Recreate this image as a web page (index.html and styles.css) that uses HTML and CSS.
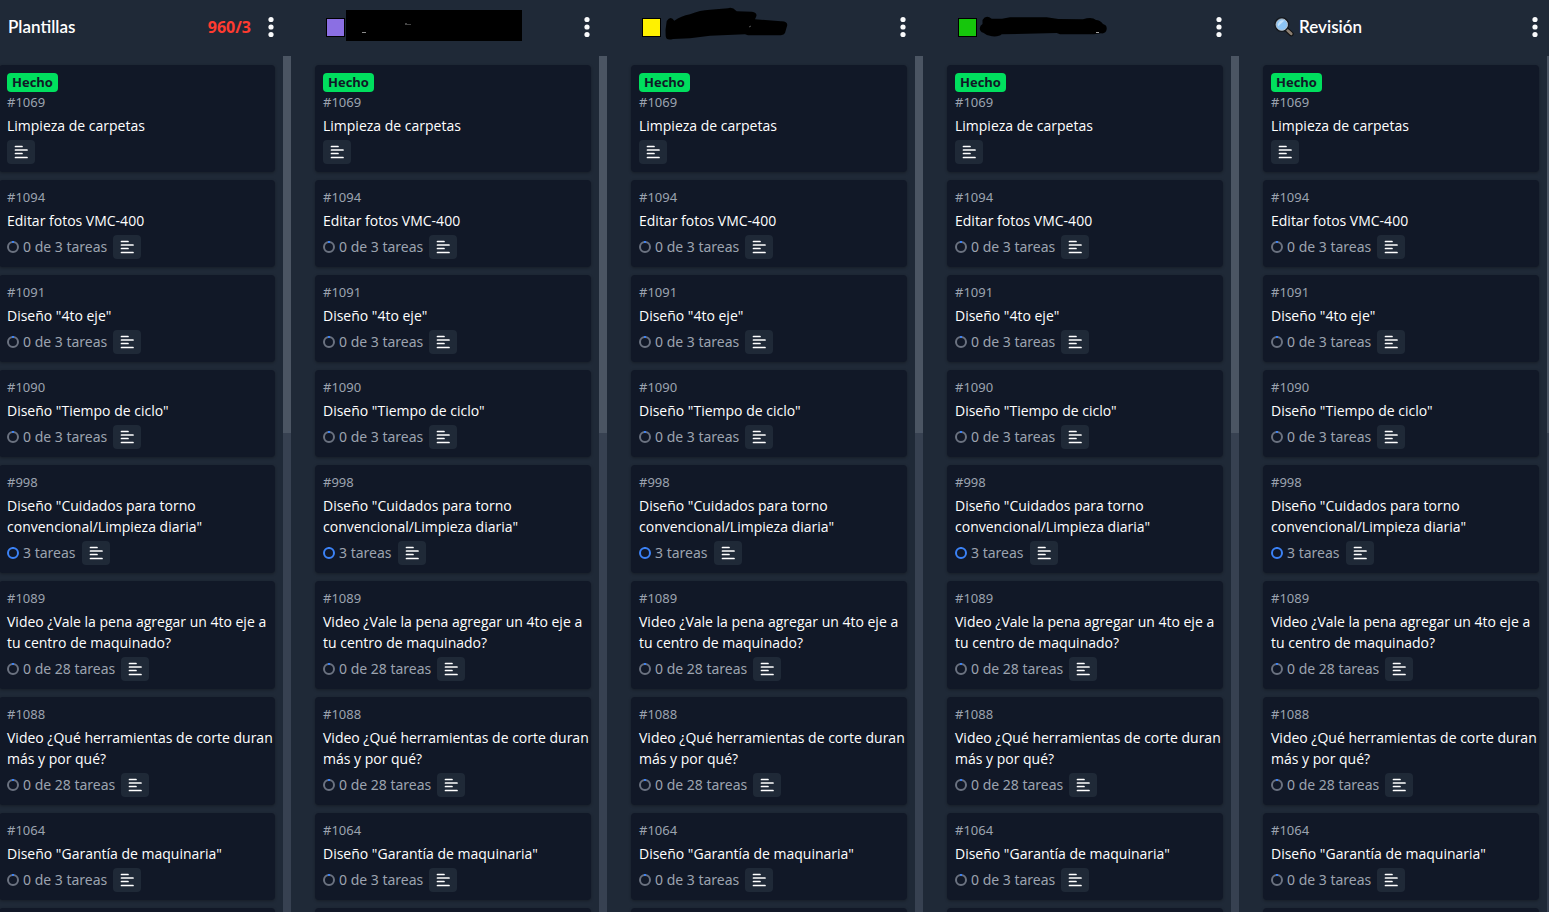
FILE: index.html
```
<!DOCTYPE html>
<html lang="es">
<head>
    <meta charset="UTF-8">
    <meta name="viewport" content="width=device-width, initial-scale=1.0">
    <title>Tablero</title>
    <link rel="stylesheet" href="styles.css">
</head>
<body>
    <!-- Iconos compartidos -->
    <svg class="icon-defs" aria-hidden="true">
        <symbol id="icon-dots" viewBox="0 0 24 24">
            <circle cx="12" cy="4.5" r="2.6"/>
            <circle cx="12" cy="12" r="2.6"/>
            <circle cx="12" cy="19.5" r="2.6"/>
        </symbol>
        <symbol id="icon-text" viewBox="0 0 14 14">
            <path d="M1.5 1.5h6.5M1.5 5h11.5M1.5 8.5h6.5M1.5 12.5h11.5" fill="none" stroke="currentColor" stroke-width="1.7" stroke-linecap="round"/>
        </symbol>
    </svg>

    <main class="board">
        <section class="column">
            <header class="column-header">
                <h2>Plantillas</h2>
                <span class="count">960/3</span>
                <button type="button" class="menu-btn" aria-label="Menú"><svg><use href="#icon-dots"/></svg></button>
            </header>
            <div class="column-body"></div>
        </section>

        <section class="column">
            <header class="column-header">
                <span class="swatch purple"></span>
                <svg class="scribble" viewBox="0 0 180 40">
                    <rect y="3" width="176" height="31"/>
                    <path d="M16 25.5h4M59 17h2" stroke="#8b8b8b"/>
                    <path d="M61 17.5h4" stroke="#444"/>
                </svg>
                <button type="button" class="menu-btn" aria-label="Menú"><svg><use href="#icon-dots"/></svg></button>
            </header>
            <div class="column-body"></div>
        </section>

        <section class="column">
            <header class="column-header">
                <span class="swatch yellow"></span>
                <svg class="scribble" viewBox="0 0 180 40">
                    <path d="M3.5 23L4.7 14Q8.7 8 12.3 13.7Q19 9 28 7.3Q38 3 48 2.7L66 1.3Q70 -.5 74.7 4.3L90 4.7Q96 6 94 10L93 12.3L119 14.3Q125 14 125.3 18L123 26Q122 28 119 28.3H86L83 27.3L48 28.7L28 31.3L11 32Q4 34 3.7 29Z"/>
                    <path d="M87 20l2-1" stroke="#555"/>
                </svg>
                <button type="button" class="menu-btn" aria-label="Menú"><svg><use href="#icon-dots"/></svg></button>
            </header>
            <div class="column-body"></div>
        </section>

        <section class="column">
            <header class="column-header">
                <span class="swatch green"></span>
                <svg class="scribble" viewBox="0 0 180 40">
                    <path d="M1.7 21.5Q2 18 4.5 17V13Q8 7 13.7 11.7H24L32 10.3H68.7L80.3 12L105 12.3Q114 9.5 118 13Q122 13 125 17Q129 18 128.7 22Q128 27 123 26.3L116 27.3H82L78.7 26L23.7 27.3Q21 30 14 29.3Q9 29 5.3 25.7Q2 25 1.7 21.5Z"/>
                    <path d="M118 25.5h3" stroke="#a3a3a3"/>
                </svg>
                <button type="button" class="menu-btn" aria-label="Menú"><svg><use href="#icon-dots"/></svg></button>
            </header>
            <div class="column-body"></div>
        </section>

        <section class="column">
            <header class="column-header">
                <svg class="lupa" viewBox="0 0 20 20">
                    <path d="M12 12L17.3 17" stroke="#111" stroke-width="4.6" stroke-linecap="round"/>
                    <path d="M12 12L13.5 13.4" stroke="#c4c8cc" stroke-width="2"/>
                    <path d="M14 13.8L17.2 16.8" stroke="#8c7f72" stroke-width="2.8" stroke-linecap="round"/>
                    <circle cx="7.8" cy="7.6" r="6.3" fill="#8cc4f4" stroke="#15191f" stroke-width="2.4"/>
                    <circle cx="7.8" cy="7.6" r="5.7" fill="#8cc4f4" stroke="#b9c3cc"/>
                    <path d="M4 9.5A5 5 0 0 1 10.5 3.6Z" fill="#c3e1fa"/>
                </svg>
                <h2>Revisión</h2>
                <button type="button" class="menu-btn" aria-label="Menú"><svg><use href="#icon-dots"/></svg></button>
            </header>
            <div class="column-body"></div>
        </section>
    </main>

    <script>
        const cards = [
            { id: 1069, title: 'Limpieza de carpetas', badge: 'Hecho' },
            { id: 1094, title: 'Editar fotos VMC-400', tasks: '0 de 3 tareas' },
            { id: 1091, title: 'Diseño "4to eje"', tasks: '0 de 3 tareas' },
            { id: 1090, title: 'Diseño "Tiempo de ciclo"', tasks: '0 de 3 tareas' },
            { id: 998, title: 'Diseño "Cuidados para torno convencional/Limpieza diaria"', tasks: '3 tareas', done: true },
            { id: 1089, title: 'Video ¿Vale la pena agregar un 4to eje a tu centro de maquinado?', tasks: '0 de 28 tareas' },
            { id: 1088, title: 'Video ¿Qué herramientas de corte duran más y por qué?', tasks: '0 de 28 tareas' },
            { id: 1064, title: 'Diseño "Garantía de maquinaria"', tasks: '0 de 3 tareas' }
        ];

        function ring(done) {
            return `<svg class="ring ${done ? 'done' : ''}" viewBox="0 0 12 12">
                <circle cx="6" cy="6" r="5"/>
                <path d="M5 1.1A5 5 0 0 1 7 1.1"/>
            </svg>`;
        }

        function cardHtml(card) {
            return `<article class="card">
                ${card.badge ? `<span class="badge">${card.badge}</span>` : ''}
                <div class="card-id">#${card.id}</div>
                <h3>${card.title}</h3>
                <div class="card-footer">
                    ${card.tasks ? `${ring(card.done)}<span class="tasks">${card.tasks}</span>` : ''}
                    <button type="button" class="text-btn" aria-label="Descripción"><svg><use href="#icon-text"/></svg></button>
                </div>
            </article>`;
        }

        // todas las columnas muestran las mismas tarjetas
        document.querySelectorAll('.column-body').forEach(body => {
            body.innerHTML = `
                <div class="cards">${cards.map(cardHtml).join('')}<article class="card"></article></div>
                <div class="scrollbar"><div class="thumb"></div></div>`;
        });
    </script>
</body>
</html>
```
FILE: styles.css
```
* {
    box-sizing: border-box;
}
body {
    margin: 0;
    background-color: #1f2937;
    color: #fff;
    font-family: "Noto Sans", sans-serif;
    overflow: hidden;
}
.icon-defs {
    display: none;
}
.board {
    display: flex;
    gap: 16px;
    height: 100vh;
    margin-left: -9px;
}
.column {
    flex: 0 0 300px;
    display: flex;
    flex-direction: column;
}
.column-header {
    display: flex;
    align-items: center;
    flex-shrink: 0;
    height: 56px;
    padding: 0 8px 2px 17px;
}
.column-header h2 {
    margin: 0;
    font-family: Lato, sans-serif;
    font-size: 17px;
    line-height: 24px;
    font-weight: 600;
}
.count {
    margin-left: auto;
    color: #ff3b30;
    font-size: 16px;
    line-height: 24px;
    font-weight: 700;
}
.menu-btn {
    display: flex;
    margin-left: auto;
    padding: 0;
    border: none;
    background: none;
    color: #f9fafb;
    cursor: pointer;
}
.count + .menu-btn {
    margin-left: 8px;
}
.menu-btn svg {
    width: 24px;
    height: 24px;
    fill: currentColor;
}
.swatch {
    width: 19px;
    height: 19px;
    margin: 0 1px 0 2px;
    border: 1px solid #000;
}
.purple {
    background-color: #8b6fe3;
}
.yellow {
    background-color: #fff100;
}
.green {
    background-color: #16c60c;
}
.scribble {
    width: 180px;
    height: 40px;
}
.lupa {
    width: 20px;
    height: 20px;
    margin: 0 5px 0 2px;
    fill: none;
}
.column-body {
    display: flex;
    flex: 1;
    min-height: 0;
}
.cards {
    flex: 1;
    display: flex;
    flex-direction: column;
    gap: 8px;
    padding: 9px 8px 0;
    overflow: hidden;
}
.scrollbar {
    width: 8px;
    background-color: #374151;
}
.thumb {
    height: 44%;
    background-color: #4b5563;
}
.card {
    flex-shrink: 0;
    min-height: 87px;
    padding: 8px 1px 8px 8px;
    border-radius: 4px;
    background-color: #111827;
    box-shadow: 0 1px 3px rgba(0, 0, 0, 0.3);
}
.badge {
    display: block;
    width: fit-content;
    margin-bottom: 1px;
    padding: 0 5px;
    border-radius: 4px;
    background-color: #00df5e;
    color: #111827;
    font-family: "Open Sans", sans-serif;
    font-size: 13px;
    line-height: 19px;
    font-weight: 700;
}
.card-id {
    color: #9ca3af;
    font-size: 13px;
    line-height: 19px;
}
.card h3 {
    margin: 3px 0 4px;
    font-family: "Open Sans", sans-serif;
    font-size: 14px;
    line-height: 21px;
    font-weight: 400;
}
.card-footer {
    display: flex;
    align-items: center;
    height: 24px;
}
.ring {
    width: 12px;
    height: 12px;
    margin-right: 4px;
    fill: none;
    stroke: #6b7280;
    stroke-width: 2;
}
.ring path,
.ring.done {
    stroke: #3b82f6;
}
.tasks {
    margin-right: 6px;
    color: #9ca3af;
    font-size: 14px;
    line-height: 24px;
}
.text-btn {
    display: flex;
    align-items: center;
    justify-content: center;
    width: 28px;
    height: 24px;
    padding: 0;
    border: none;
    border-radius: 4px;
    background-color: #1f2937;
    color: #fff;
    cursor: pointer;
}
.text-btn svg {
    width: 14px;
    height: 14px;
}
```
